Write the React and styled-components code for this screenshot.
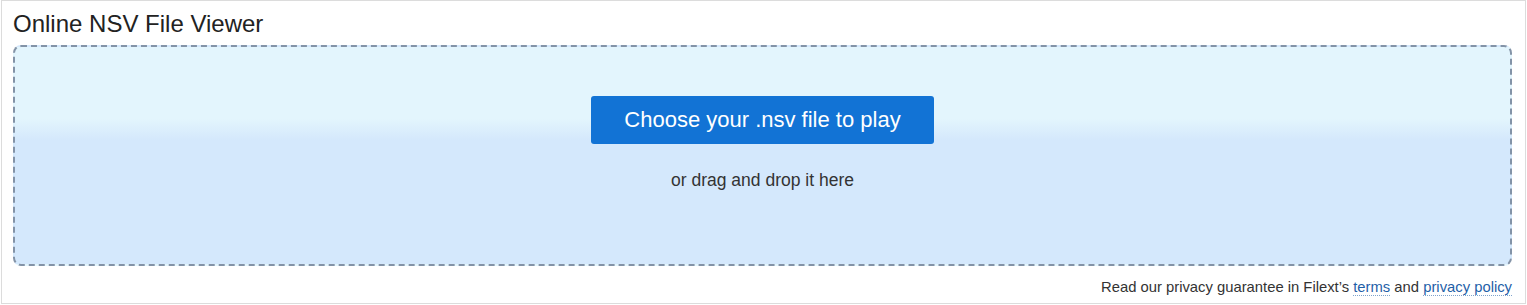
import React from 'react';
import styled, { createGlobalStyle } from 'styled-components';

const GlobalStyle = createGlobalStyle`
  html, body {
    margin: 0;
    padding: 0;
    background: #fff;
  }
  body {
    font-family: "Liberation Sans", Arial, sans-serif;
    color: #333;
  }
`;

const Frame = styled.div`
  box-sizing: border-box;
  width: 1525px;
  height: 304px;
  margin-left: 1px;
  border: 1px solid #dcdcdc;
  padding: 9px 13px 0 11px;
  display: flex;
  flex-direction: column;
`;

const Title = styled.h1`
  margin: 0 0 7px;
  font-size: 24px;
  line-height: 28px;
  font-weight: 400;
  color: #222;
`;

const DropZone = styled.div`
  box-sizing: border-box;
  height: 221px;
  border: 2px dashed #8393a7;
  border-radius: 8px;
  background: linear-gradient(to bottom, #e3f5fd 33%, #d4e8fc 43%);
  padding-top: 49px;
  display: flex;
  flex-direction: column;
  align-items: center;
`;

const ChooseButton = styled.button`
  height: 48px;
  padding: 0 33px;
  border: none;
  border-radius: 3px;
  background: #1273d5;
  color: #fff;
  font-family: "Liberation Sans", Arial, sans-serif;
  font-size: 22px;
  cursor: pointer;
`;

const Hint = styled.div`
  margin-top: 26px;
  font-size: 17.5px;
  line-height: 20px;
  color: #333;
`;

const Footer = styled.div`
  margin-top: 13px;
  text-align: right;
  font-size: 14.8px;
  line-height: 17px;
  color: #333;
`;

const Link = styled.a`
  color: #1f5fa8;
  text-decoration: none;
  border-bottom: 1px dotted #7fa3cc;
`;

export default function App() {
  return (
    <>
      <GlobalStyle />
      <Frame>
        <Title>Online NSV File Viewer</Title>
        <DropZone>
          <ChooseButton>Choose your .nsv file to play</ChooseButton>
          <Hint>or drag and drop it here</Hint>
        </DropZone>
        <Footer>
          Read our privacy guarantee in Filext’s <Link href="#">terms</Link> and{' '}
          <Link href="#">privacy policy</Link>
        </Footer>
      </Frame>
    </>
  );
}
